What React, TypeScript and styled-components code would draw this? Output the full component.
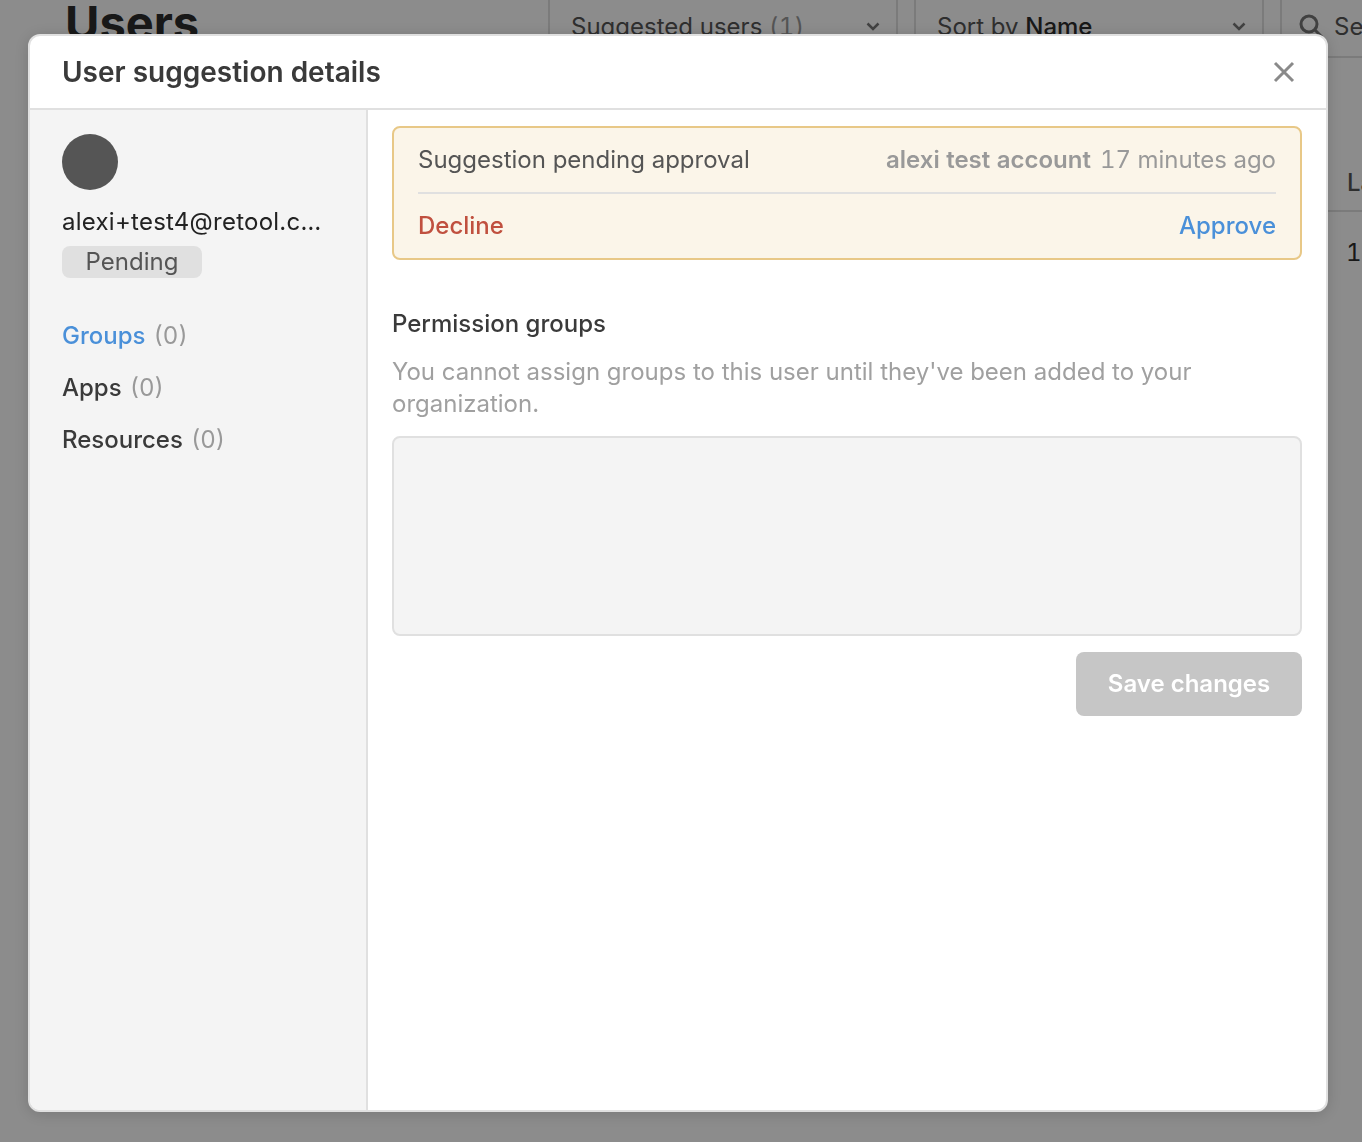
import React from 'react'
import styled, { createGlobalStyle } from 'styled-components'

const GlobalStyle = createGlobalStyle`
  html, body {
    margin: 0;
    height: 100%;
    overflow: hidden;
    background: #fff;
    font-family: Inter, "Liberation Sans", sans-serif;
    color: #2d2d2d;
  }
  * {
    box-sizing: border-box;
  }
`

const Page = styled.div`
  height: 1142px;
  width: 1362px;
  overflow: hidden;
`

const Toolbar = styled.div`
  display: flex;
  height: 58px;
  margin-left: 30px;
  padding-left: 35px;
  border-bottom: 2px solid #e0e0e0;
`

const PageTitle = styled.h1`
  flex: none;
  width: 483px;
  margin: -6px 0 0;
  font-size: 47px;
  line-height: 58px;
  font-weight: 700;
`

const FilterSelect = styled.div`
  display: flex;
  flex: none;
  align-items: center;
  justify-content: space-between;
  width: 350px;
  margin-right: 16px;
  padding: 0 16px 4px 21px;
  border-left: 2px solid #e0e0e0;
  border-right: 2px solid #e0e0e0;
  font-size: 24px;
  color: #555;

  b {
    font-weight: 500;
    color: #2d2d2d;
  }

  i {
    font-style: normal;
    font-feature-settings: "tnum";
    letter-spacing: 0.4px;
    color: #999;
  }
`

const SearchField = styled.div`
  display: flex;
  flex: none;
  align-items: center;
  gap: 11px;
  padding: 0 0 4px 17px;
  border-left: 2px solid #e0e0e0;
  font-size: 24px;
  color: #555;
  white-space: nowrap;
`

const TableHeader = styled.div`
  height: 154px;
  margin-left: 30px;
  padding: 111px 0 0 1317px;
  border-bottom: 2px solid #e0e0e0;
  font-size: 24px;
  font-weight: 500;
  line-height: 28px;
  color: #555;
  white-space: nowrap;
`

const TableRow = styled.div`
  padding: 26px 0 0 1346px;
  font-size: 24px;
  line-height: 30px;
  font-feature-settings: "tnum";
`

const Overlay = styled.div`
  position: fixed;
  inset: 0;
  background: rgba(0, 0, 0, 0.45);
`

const Modal = styled.div`
  position: absolute;
  left: 28px;
  top: 34px;
  width: 1300px;
  height: 1078px;
  display: flex;
  flex-direction: column;
  overflow: hidden;
  background: #fff;
  border: 2px solid #e0e0e0;
  border-radius: 12px;
  box-shadow: 0 2px 16px rgba(0, 0, 0, 0.16);
`

const ModalHeader = styled.div`
  display: flex;
  align-items: center;
  justify-content: space-between;
  flex: none;
  height: 74px;
  padding: 0 31px 0 32px;
  border-bottom: 2px solid #e0e0e0;
`

const ModalTitle = styled.h2`
  margin: 0;
  font-size: 28px;
  line-height: 36px;
  font-weight: 600;
  color: #3a3a3a;
`

const CloseButton = styled.button`
  display: flex;
  padding: 0;
  border: 0;
  background: none;
  color: #8a8a8a;
`

const ModalBody = styled.div`
  display: flex;
  flex: 1;
  min-height: 0;
`

const Sidebar = styled.aside`
  flex: none;
  width: 338px;
  padding: 24px 44px 0 32px;
  background: #f4f4f4;
  border-right: 2px solid #e0e0e0;
`

const Avatar = styled.div`
  width: 56px;
  height: 56px;
  border-radius: 50%;
  background: #555;
`

const Email = styled.div`
  margin-top: 16px;
  font-size: 24px;
  line-height: 32px;
  letter-spacing: 0.25px;
  color: #222;
  white-space: nowrap;
  overflow: hidden;
  text-overflow: ellipsis;
`

const StatusPill = styled.div`
  width: 140px;
  height: 32px;
  margin-top: 8px;
  border-radius: 8px;
  background: #e0e0e0;
  font-size: 24px;
  line-height: 32px;
  text-align: center;
  color: #555;
`

const SideNav = styled.nav`
  display: flex;
  flex-direction: column;
  gap: 20px;
  margin-top: 42px;
`

const NavItem = styled.div<{ $active?: boolean }>`
  font-size: 24px;
  line-height: 32px;
  font-weight: 500;
  color: ${(p) => (p.$active ? '#4a90d9' : '#3a3a3a')};

  span {
    margin-left: 8px;
    font-weight: 400;
    font-feature-settings: "tnum";
    color: #999;
  }
`

const Content = styled.main`
  flex: 1;
  display: flex;
  flex-direction: column;
  padding: 16px 24px;
`

const Notice = styled.div`
  padding: 0 24px;
  height: 134px;
  background: #fbf5e9;
  border: 2px solid #e8c887;
  border-radius: 8px;
`

const NoticeTop = styled.div`
  display: flex;
  align-items: center;
  justify-content: space-between;
  height: 66px;
  padding-bottom: 2px;
  border-bottom: 2px solid #e0e0e0;
  font-size: 24px;
  color: #555;
`

const NoticeMeta = styled.div`
  font-feature-settings: "tnum";
  color: #999;

  b {
    margin-right: 9px;
    font-weight: 600;
  }
`

const NoticeActions = styled.div`
  display: flex;
  align-items: center;
  justify-content: space-between;
  height: 62px;
  font-size: 24px;
  font-weight: 500;
`

const ActionLink = styled.a<{ $danger?: boolean }>`
  color: ${(p) => (p.$danger ? '#c0503f' : '#4a90d9')};
`

const SectionTitle = styled.h3`
  margin: 48px 0 0;
  font-size: 24px;
  line-height: 32px;
  font-weight: 500;
  color: #3a3a3a;
`

const HelpText = styled.p`
  margin: 16px 0 0;
  font-size: 24px;
  line-height: 32px;
  color: #a0a0a0;
`

const GroupsBox = styled.div`
  height: 200px;
  margin-top: 16px;
  background: #f4f4f4;
  border: 2px solid #e0e0e0;
  border-radius: 8px;
`

const SaveButton = styled.button`
  align-self: flex-end;
  width: 226px;
  height: 64px;
  margin-top: 16px;
  padding: 0 0 2px;
  border: 0;
  border-radius: 8px;
  background: #c6c6c6;
  font-family: inherit;
  font-size: 24px;
  font-weight: 600;
  color: #fff;
`

const Chevron = () => (
  <svg width="14" height="10" viewBox="0 0 14 10" fill="none">
    <path d="M1.500 2.500 7 8l5.500-5.500" stroke="#777" strokeWidth="2.500" />
  </svg>
)

export default function App() {
  return (
    <>
      <GlobalStyle />
      <Page>
        <Toolbar>
          <PageTitle>Users</PageTitle>
          <FilterSelect>
            <span>
              Suggested users <i>(1)</i>
            </span>
            <Chevron />
          </FilterSelect>
          <FilterSelect>
            <span>
              Sort by <b>Name</b>
            </span>
            <Chevron />
          </FilterSelect>
          <SearchField>
            <svg width="24" height="24" viewBox="0 0 24 24" fill="none" stroke="#777" strokeWidth="3">
              <circle cx="10" cy="10" r="8" />
              <path d="m16 16 7 7" />
            </svg>
            Search
          </SearchField>
        </Toolbar>
        <TableHeader>Last</TableHeader>
        <TableRow>1</TableRow>
      </Page>
      <Overlay>
        <Modal>
          <ModalHeader>
            <ModalTitle>User suggestion details</ModalTitle>
            <CloseButton>
              <svg width="22" height="22" viewBox="0 0 22 22" fill="none" stroke="currentColor" strokeWidth="3">
                <path d="M2 2l18 18M20 2 2 20" />
              </svg>
            </CloseButton>
          </ModalHeader>
          <ModalBody>
            <Sidebar>
              <Avatar />
              <Email>alexi+test4@retool.com</Email>
              <StatusPill>Pending</StatusPill>
              <SideNav>
                <NavItem $active>
                  Groups<span>(0)</span>
                </NavItem>
                <NavItem>
                  Apps<span>(0)</span>
                </NavItem>
                <NavItem>
                  Resources<span>(0)</span>
                </NavItem>
              </SideNav>
            </Sidebar>
            <Content>
              <Notice>
                <NoticeTop>
                  <span>Suggestion pending approval</span>
                  <NoticeMeta>
                    <b>alexi test account</b>17 minutes ago
                  </NoticeMeta>
                </NoticeTop>
                <NoticeActions>
                  <ActionLink $danger>Decline</ActionLink>
                  <ActionLink>Approve</ActionLink>
                </NoticeActions>
              </Notice>
              <SectionTitle>Permission groups</SectionTitle>
              <HelpText>
                You cannot assign groups to this user until they've been added to your organization.
              </HelpText>
              <GroupsBox />
              <SaveButton>Save changes</SaveButton>
            </Content>
          </ModalBody>
        </Modal>
      </Overlay>
    </>
  )
}
